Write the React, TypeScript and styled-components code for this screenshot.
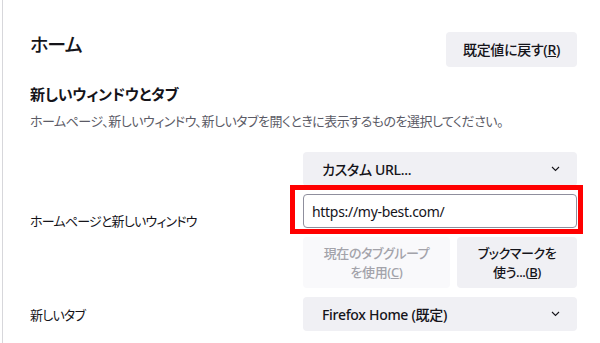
import React from "react";
import styled, { createGlobalStyle } from "styled-components";

const Global = createGlobalStyle`
  html, body { margin: 0; padding: 0; background: #fff; }
  body {
    font-family: "Noto Sans", "Noto Sans CJK JP", sans-serif;
    color: #15141a;
    font-feature-settings: "palt";
  }
  * { box-sizing: border-box; }
`;

const Page = styled.div`
  margin-left: 2px;
  width: 598px;
  height: 343px;
  border-left: 1px solid #d7d7db;
  padding: 32px 23px 0 27px;
  overflow: hidden;
`;

const Header = styled.div`
  display: flex;
  justify-content: space-between;
  align-items: flex-start;
`;

const Title = styled.h1`
  margin: 0;
  font-size: 19px;
  font-weight: 500;
  line-height: 26px;
  letter-spacing: -1px;
`;

const Button = styled.button<{ $disabled?: boolean }>`
  font-family: inherit;
  font-feature-settings: "palt";
  border: none;
  border-radius: 4px;
  background: ${(p) => (p.$disabled ? "#f9f9fb" : "#f0f0f4")};
  color: ${(p) => (p.$disabled ? "#a3a3aa" : "#15141a")};
  font-size: 14px;
  font-weight: 500;
  line-height: 19px;
  padding: 0 12px;
  height: 35px;
  margin: 0;
  white-space: nowrap;
`;

const ResetButton = styled(Button)`
  width: 131px;
  letter-spacing: -0.3px;
`;

const SectionHeading = styled.h2`
  margin: 17px 0 0;
  font-size: 15px;
  font-weight: 700;
  line-height: 20px;
  letter-spacing: -0.2px;
`;

const Description = styled.p`
  margin: 8px 0 0;
  font-size: 13px;
  line-height: 19px;
  letter-spacing: -0.5px;
  color: #5b5b66;
`;

const Grid = styled.div`
  display: grid;
  grid-template-columns: 1fr 274px;
  align-items: center;
  row-gap: 9px;
  margin-top: 21px;
`;

const Label = styled.div`
  font-size: 13px;
  line-height: 20px;
  letter-spacing: -0.8px;
  color: #15141a;
  padding-top: 2px;
`;

const Controls = styled.div`
  display: flex;
  flex-direction: column;
  gap: 8px;
`;

const Select = styled.div`
  display: flex;
  align-items: center;
  justify-content: space-between;
  height: 34px;
  border-radius: 4px;
  background: #f0f0f4;
  padding: 0 17px 0 19px;
  font-size: 14px;
  font-weight: 500;
  letter-spacing: -0.3px;
`;

const Chevron = () => (
  <svg width="9" height="6" viewBox="0 0 9 6">
    <path d="M1 1 L4.5 4.5 L8 1" fill="none" stroke="#15141a" strokeWidth="1.1" />
  </svg>
);

const InputWrap = styled.div`
  position: relative;
`;

const Input = styled.div`
  height: 34px;
  border: 1px solid #8f8f9d;
  border-radius: 4px;
  display: flex;
  align-items: center;
  padding-left: 8px;
  font-size: 14px;
  letter-spacing: -0.3px;
  color: #15141a;
  background: #fff;
`;

const Highlight = styled.div`
  position: absolute;
  left: -13px;
  right: -6px;
  top: -9px;
  bottom: -6px;
  border: 5px solid #ff0000;
  pointer-events: none;
`;

const ButtonRow = styled.div`
  display: grid;
  grid-template-columns: 147px 120px;
  column-gap: 7px;
  margin-top: 1px;
`;

const TallButton = styled(Button)`
  height: 51px;
  padding: 0 6px;
  text-align: center;
  font-size: 13px;
  letter-spacing: -0.4px;
  line-height: 19px;
`;

export default function App() {
  return (
    <>
      <Global />
      <Page>
        <Header>
          <Title>ホーム</Title>
          <ResetButton>
            既定値に戻す(<u>R</u>)
          </ResetButton>
        </Header>
        <SectionHeading>新しいウィンドウとタブ</SectionHeading>
        <Description>
          ホームページ、新しいウィンドウ、新しいタブを開くときに表示するものを選択してください。
        </Description>
        <Grid>
          <Label>ホームページと新しいウィンドウ</Label>
          <Controls>
            <Select>
              <span>カスタム URL...</span>
              <Chevron />
            </Select>
            <InputWrap>
              <Input>https://my-best.com/</Input>
              <Highlight />
            </InputWrap>
            <ButtonRow>
              <TallButton $disabled>
                現在のタブグループ
                <br />
                を使用(<u>C</u>)
              </TallButton>
              <TallButton>
                ブックマークを
                <br />
                使う...(<u>B</u>)
              </TallButton>
            </ButtonRow>
          </Controls>
          <Label>新しいタブ</Label>
          <Select>
            <span>Firefox Home (既定)</span>
            <Chevron />
          </Select>
        </Grid>
      </Page>
    </>
  );
}
